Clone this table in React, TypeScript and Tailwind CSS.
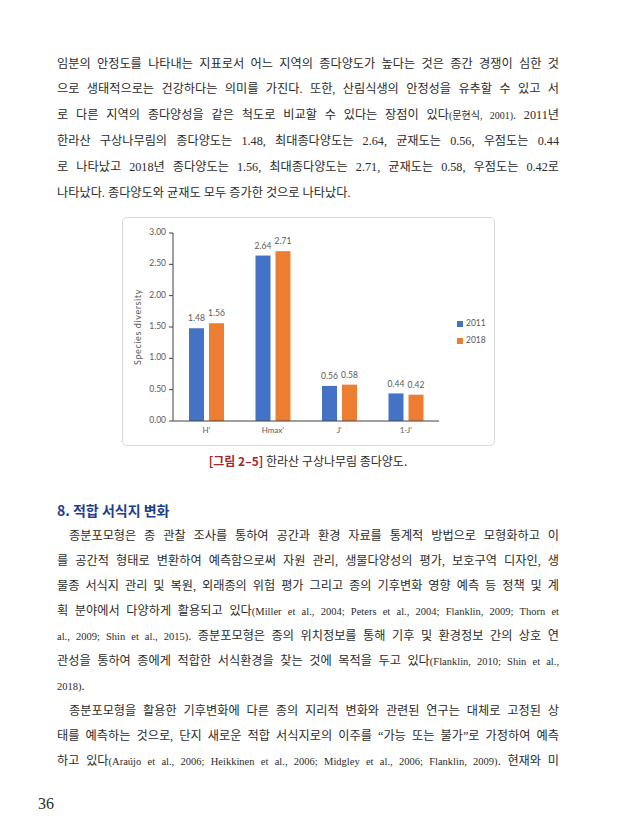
import React from "react";

const body = '"Liberation Serif", "Noto Sans CJK KR", serif';
const chartFont = 'Lato, "Open Sans", sans-serif';

function Line({ children, last = false, indent = false, h = "h-[25.8px] leading-[25.8px]" }: { children: React.ReactNode; last?: boolean; indent?: boolean; h?: string }) {
  return (
    <div
      className={`${h} text-justify ${last ? "" : "[text-align-last:justify]"} ${indent ? "pl-[12px]" : ""}`}
    >
      {children}
    </div>
  );
}

function Cite({ children }: { children: React.ReactNode }) {
  return <span className="text-[10.5px]">{children}</span>;
}

const data = [
  { cat: "H'", a: 1.48, b: 1.56 },
  { cat: "Hmax'", a: 2.64, b: 2.71 },
  { cat: "J'", a: 0.56, b: 0.58 },
  { cat: "1-J'", a: 0.44, b: 0.42 },
];

function Chart() {
  const x0 = 50;
  const x1 = 316;
  const yTop = 15;
  const yBot = 203;
  const scale = (yBot - yTop) / 3;
  const cw = (x1 - x0) / 4;
  const ticks = [0, 0.5, 1, 1.5, 2, 2.5, 3];
  const txt = "#595959";
  return (
    <svg width="371" height="227" viewBox="0 0 371 227" style={{ fontFamily: chartFont }}>
      {ticks.map((t) => {
        const y = yBot - t * scale;
        return (
          <g key={t}>
            <line x1={46} x2={x0} y1={y} y2={y} stroke="#404040" strokeWidth={1} />
            <text x={43} y={y} fontSize={8.5} fill={txt} textAnchor="end" dominantBaseline="middle">
              {t.toFixed(2)}
            </text>
          </g>
        );
      })}
      <line x1={x0} x2={x0} y1={yTop} y2={yBot} stroke="#404040" strokeWidth={1} />
      {data.map((d, i) => {
        const c = x0 + cw * (i + 0.5);
        const ha = d.a * scale;
        const hb = d.b * scale;
        return (
          <g key={d.cat}>
            <rect x={c - 17.25} y={yBot - ha} width={15} height={ha} fill="#4472C4" />
            <rect x={c + 2.75} y={yBot - hb} width={15} height={hb} fill="#ED7D31" />
            <text x={c - 9.75} y={yBot - ha - 9} fontSize={8.5} fill={txt} textAnchor="middle" dominantBaseline="middle">
              {d.a.toFixed(2)}
            </text>
            <text x={c + 10.25} y={yBot - hb - 9} fontSize={8.5} fill={txt} textAnchor="middle" dominantBaseline="middle">
              {d.b.toFixed(2)}
            </text>
            <text x={c} y={213} fontSize={8} fill={txt} textAnchor="middle" dominantBaseline="middle">
              {d.cat}
            </text>
          </g>
        );
      })}
      <line x1={x0} x2={x1} y1={yBot} y2={yBot} stroke="#404040" strokeWidth={1} />
      <text
        x={16}
        y={109}
        fontSize={9}
        fill={txt}
        textAnchor="middle"
        dominantBaseline="middle"
        letterSpacing={0.6}
        transform="rotate(-90 16 109)"
      >
        Species diversity
      </text>
      <rect x={334} y={103} width={6} height={6} fill="#4472C4" />
      <text x={343} y={106} fontSize={8.5} fill={txt} dominantBaseline="middle">
        2011
      </text>
      <rect x={334} y={120} width={6} height={6} fill="#ED7D31" />
      <text x={343} y={123} fontSize={8.5} fill={txt} dominantBaseline="middle">
        2018
      </text>
    </svg>
  );
}

export default function App() {
  const h2 = "h-[25.03px] leading-[25.03px]";
  return (
    <div className="w-[642px] h-[840px] bg-white overflow-hidden" style={{ fontFamily: body }}>
      <div className="ml-[57px] w-[502px] pt-[51.6px] text-[12.2px] text-[#2b2b2b]">
        <div>
          <Line>임분의 안정도를 나타내는 지표로서 어느 지역의 종다양도가 높다는 것은 종간 경쟁이 심한 것</Line>
          <Line>으로 생태적으로는 건강하다는 의미를 가진다. 또한, 산림식생의 안정성을 유추할 수 있고 서</Line>
          <Line>
            로 다른 지역의 종다양성을 같은 척도로 비교할 수 있다는 장점이 있다<span className="text-[10px]">(문현식, 2001)</span>. 2011년
          </Line>
          <Line>한라산 구상나무림의 종다양도는 1.48, 최대종다양도는 2.64, 균재도는 0.56, 우점도는 0.44</Line>
          <Line>로 나타났고 2018년 종다양도는 1.56, 최대종다양도는 2.71, 균재도는 0.58, 우점도는 0.42로</Line>
          <Line last>나타났다. 종다양도와 균재도 모두 증가한 것으로 나타났다.</Line>
        </div>

        <div className="mx-auto mt-[10.6px] w-[373px] h-[229px] border border-[#d9d9d9] rounded-[5px] bg-white">
          <Chart />
        </div>

        <div className="mt-[5px] h-[20px] leading-[20px] text-center text-[12px]" style={{ fontFamily: '"Noto Sans CJK KR", sans-serif' }}>
          <span className="font-bold text-[#a3282b]">[그림 2–5]</span>
          <span className="text-[#2b2b2b]"> 한라산 구상나무림 종다양도.</span>
        </div>

        <div
          className="mt-[29px] h-[20px] leading-[20px] text-[14px] font-bold text-[#1d3f8f]"
          style={{ fontFamily: '"Noto Sans CJK KR", sans-serif' }}
        >
          8. 적합 서식지 변화
        </div>

        <div className="mt-[4px]">
          <Line h={h2} indent>
            종분포모형은 종 관찰 조사를 통하여 공간과 환경 자료를 통계적 방법으로 모형화하고 이
          </Line>
          <Line h={h2}>를 공간적 형태로 변환하여 예측함으로써 자원 관리, 생물다양성의 평가, 보호구역 디자인, 생</Line>
          <Line h={h2}>물종 서식지 관리 및 복원, 외래종의 위험 평가 그리고 종의 기후변화 영향 예측 등 정책 및 계</Line>
          <Line h={h2}>
            획 분야에서 다양하게 활용되고 있다<Cite>(Miller et al., 2004; Peters et al., 2004; Flanklin, 2009; Thorn et</Cite>
          </Line>
          <Line h={h2}>
            <Cite>al., 2009; Shin et al., 2015)</Cite>. 종분포모형은 종의 위치정보를 통해 기후 및 환경정보 간의 상호 연
          </Line>
          <Line h={h2}>
            관성을 통하여 종에게 적합한 서식환경을 찾는 것에 목적을 두고 있다<Cite>(Flanklin, 2010; Shin et al.,</Cite>
          </Line>
          <Line h={h2} last>
            <Cite>2018)</Cite>.
          </Line>
          <Line h={h2} indent>
            종분포모형을 활용한 기후변화에 다른 종의 지리적 변화와 관련된 연구는 대체로 고정된 상
          </Line>
          <Line h={h2}>
            태를 예측하는 것으로, 단지 새로운 적합 서식지로의 이주를 “가능 또는 불가”로 가정하여 예측
          </Line>
          <Line h={h2}>
            하고 있다<Cite>(Araújo et al., 2006; Heikkinen et al., 2006; Midgley et al., 2006; Flanklin, 2009)</Cite>. 현재와 미
          </Line>
        </div>
      </div>
      <div className="ml-[38px] mt-[20px] h-[20px] leading-[20px] text-[16px] text-[#2b2b2b]">36</div>
    </div>
  );
}
